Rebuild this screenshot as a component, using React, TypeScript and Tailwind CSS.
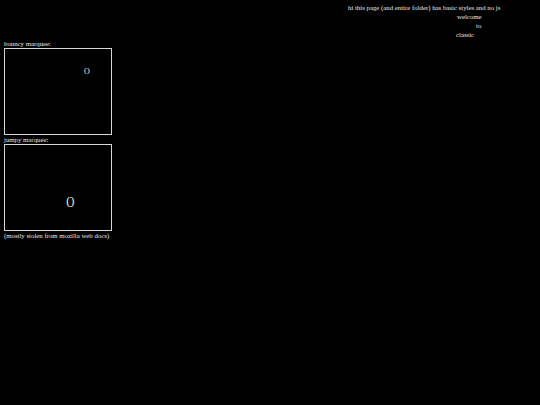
export default function App() {
  return (
    <div className="min-h-[405px] bg-black text-[#e8e8e8] text-[6.8px] leading-[9px] pt-[3px] pl-[4px] font-['Liberation_Serif',serif]">
      <div className="ml-[344px] flex flex-col">
        <div>hi this page (and entire folder) has basic styles and no js</div>
        <div className="pl-[109px]">welcome</div>
        <div className="pl-[128px]">to</div>
        <div className="pl-[108px]">classic</div>
      </div>
      <div>bouncy marquee:</div>
      <div className="relative w-[108px] h-[87px] border border-[#d8d8d8]">
        <span className="absolute left-[79px] top-[18px] text-[8px] leading-[10px]">O</span>
      </div>
      <div>jumpy marquee:</div>
      <div className="relative w-[108px] h-[87px] border border-[#d8d8d8]">
        <span className="absolute left-[60px] top-[48px] text-[15px] leading-[18px] scale-x-[0.75]">O</span>
      </div>
      <div>(mostly stolen from mozilla web docs)</div>
    </div>
  );
}
